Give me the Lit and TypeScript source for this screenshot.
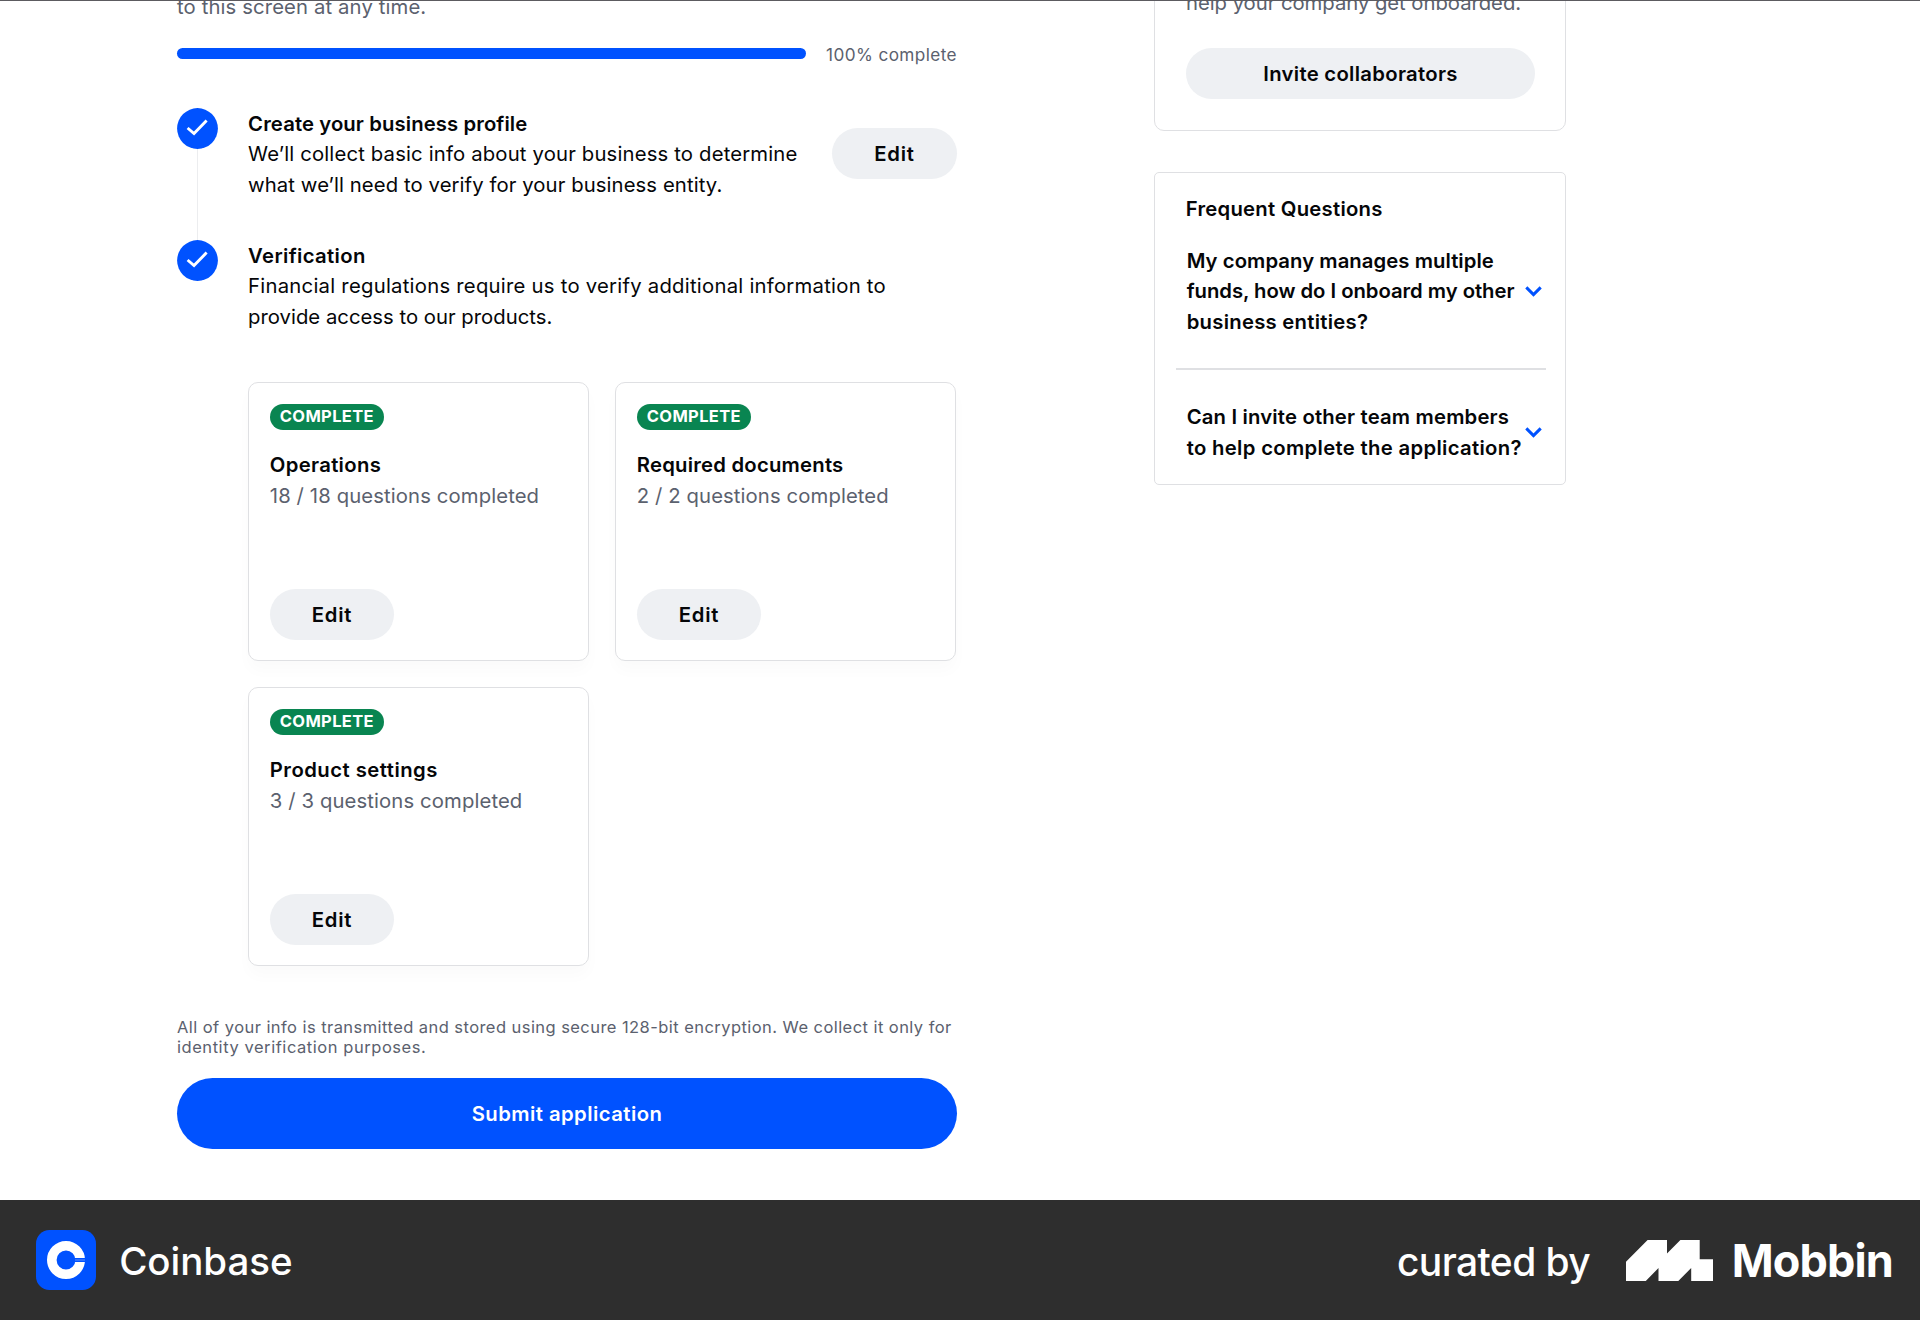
import { LitElement, html, css, svg } from 'lit';
import { customElement } from 'lit/decorators.js';

/** A line of copy and its tracking in pixels. */
type Line = [text: string, tracking: number];

interface Task {
  title: Line;
  progress: Line;
}

const INTRO: Line = ['to this screen at any time.', 0.12];
const PROFILE: Line[] = [
  ['We’ll collect basic info about your business to determine', 0.165],
  ['what we’ll need to verify for your business entity.', 0.09],
];
const VERIFICATION: Line[] = [
  ['Financial regulations require us to verify additional information to', 0.25],
  ['provide access to our products.', 0.01],
];
const TASKS: Task[] = [
  { title: ['Operations', 0.32], progress: ['18 / 18 questions completed', 0.11] },
  { title: ['Required documents', 0.22], progress: ['2 / 2 questions completed', 0.1] },
  { title: ['Product settings', 0.47], progress: ['3 / 3 questions completed', 0.11] },
];
const NOTE: Line[] = [
  ['All of your info is transmitted and stored using secure 128-bit encryption. We collect it only for', 0.44],
  ['identity verification purposes.', 0.55],
];
const QUESTIONS: Line[][] = [
  [
    ['My company manages multiple', 0.06],
    ['funds, how do I onboard my other', -0.04],
    ['business entities?', 0.26],
  ],
  [
    ['Can I invite other team members', 0.17],
    ['to help complete the application?', 0.32],
  ],
];

const line = ([text, tracking]: Line) =>
  html`<span class="line" style="letter-spacing:${tracking}px">${text}</span>`;

const check = svg`<svg class="check" viewBox="0 0 41 41" aria-hidden="true">
  <circle cx="20.5" cy="20.5" r="20.4" fill="#0052ff" />
  <path d="M10.6 20 17 25.6 29.6 12.6" fill="none" stroke="#fff" stroke-width="2.9" />
</svg>`;

const chevron = svg`<svg class="chevron" viewBox="0 0 17 11" aria-hidden="true">
  <path d="M1.3 1.4 8.5 8.6 15.7 1.4" fill="none" stroke="#0052ff" stroke-width="3" />
</svg>`;

@customElement('app-root')
export class AppRoot extends LitElement {
  static styles = css`
    :host {
      display: block;
      font-family: Inter, 'Liberation Sans', sans-serif;
      font-size: 20.3px;
      line-height: 30.5px;
      color: #050608;
    }
    * { box-sizing: border-box; }
    .page { display: flex; flex-direction: column; width: 1920px; height: 1320px; background: #fff; }
    .main {
      display: flex;
      align-items: flex-start;
      gap: 197px;
      height: 1200px;
      padding-left: 177px;
      border-top: 1px solid #5c5b60;
      overflow: hidden;
    }
    .line { display: block; white-space: nowrap; }
    .muted { color: #5b616e; }
    .title { font-weight: 600; }

    .content { width: 780px; margin-top: -8.8px; }
    .progress { display: flex; align-items: center; gap: 20.5px; height: 25px; margin-top: 19.5px; }
    .bar { width: 629px; height: 10.5px; margin-bottom: 2.5px; border-radius: 6px; background: #0052ff; }
    .percent { font-size: 17.2px; letter-spacing: 0.4px; line-height: 25px; white-space: nowrap; }

    .steps { margin-top: 41.4px; }
    .step { display: flex; gap: 30.1px; }
    .rail { display: flex; flex: none; flex-direction: column; align-items: center; width: 41px; margin-top: -0.6px; }
    .check { display: block; width: 41px; height: 41px; }
    .connector { flex: 1; width: 1.3px; background: #ecedef; }
    .body { display: flex; flex: 1; justify-content: space-between; align-items: center; padding-bottom: 40.5px; }
    .body.stacked { display: block; padding: 0; }

    .button {
      display: flex;
      align-items: center;
      justify-content: center;
      height: 51px;
      padding: 1px 0 0;
      border: 0;
      border-radius: 26px;
      background: #eef0f3;
      color: inherit;
      font: inherit;
      font-weight: 600;
      letter-spacing: 0.3px;
    }
    .edit { width: 124.5px; letter-spacing: 0.8px; }
    .body > .edit { width: 125px; margin-bottom: 2px; }

    .cards { display: grid; grid-template-columns: 341.2px 341.2px; gap: 26px 25.8px; margin-top: 50.4px; }
    .card {
      display: flex;
      flex-direction: column;
      align-items: flex-start;
      height: 279px;
      padding: 20.6px 20.7px 20px;
      border: 1px solid #dfe0e3;
      border-radius: 10px;
      background: #fff;
      box-shadow: 0 10px 15px rgba(0, 0, 0, 0.02);
    }
    .badge {
      height: 25.5px;
      margin-bottom: 20.6px;
      padding: 0 10px;
      border-radius: 13px;
      background: #098551;
      color: #fff;
      font-size: 16.5px;
      font-weight: 700;
      letter-spacing: 0.35px;
      line-height: 25.5px;
    }
    .card .button { margin-top: auto; }

    .note { margin-top: 50.4px; font-size: 16.5px; line-height: 20.3px; }
    .submit { width: 100%; height: 71px; margin-top: 20.3px; padding-top: 2px; border-radius: 36px; background: #0052ff; color: #fff; letter-spacing: 0.45px; }

    .side { display: flex; flex-direction: column; gap: 41px; width: 412px; margin-top: -33.1px; }
    .panel { border: 1px solid #dfe0e3; border-radius: 10px; }
    .invite { padding: 19px 31px 31px; }
    .invite .button { width: 349px; margin-top: 29.6px; }
    .faq { height: 313px; padding: 20.9px 16px 0 20.5px; border-radius: 5px; }
    .heading { padding: 0 10.2px; font-weight: 600; }
    .question { display: flex; align-items: center; justify-content: space-between; padding: 0 7.5px 0 11.2px; font-weight: 600; }
    .question .copy { flex: none; width: 337.5px; }
    .question.first { margin-top: 21.5px; }
    .chevron { display: block; flex: none; width: 17px; height: 11px; }
    .divider { width: 370px; height: 1.3px; margin: 31.1px 0 32.4px; background: #dfe0e3; }

    .footer {
      display: flex;
      align-items: center;
      justify-content: space-between;
      height: 120px;
      padding: 0 27px 0 36px;
      background: #2e2e2e;
      color: #fff;
    }
    .brand { display: flex; align-items: center; }
    .mark { display: block; width: 60px; height: 60px; margin-right: 23.2px; }
    .name { padding-top: 2px; font-size: 38.5px; font-weight: 500; line-height: 48px; letter-spacing: -0.05px; }
    .curated { padding-top: 4px; font-size: 39px; font-weight: 500; letter-spacing: -0.6px; line-height: 48px; }
    .glyph { display: block; width: 87px; height: 41.3px; margin: 0.3px 18.2px 0 36.4px; }
    .mobbin { padding-top: 1px; font-size: 45px; font-weight: 700; letter-spacing: -0.85px; line-height: 52px; }
  `;

  private card(task: Task) {
    return html`<article class="card">
      <span class="badge">COMPLETE</span>
      <div class="title">${line(task.title)}</div>
      <div class="muted">${line(task.progress)}</div>
      <button class="button edit">Edit</button>
    </article>`;
  }

  render() {
    return html`<div class="page">
      <main class="main">
        <section class="content">
          <div class="muted">${line(INTRO)}</div>
          <div class="progress">
            <div class="bar"></div>
            <span class="percent muted">100% complete</span>
          </div>
          <div class="steps">
            <div class="step">
              <div class="rail">${check}<div class="connector"></div></div>
              <div class="body">
                <div>
                  <div class="title">${line(['Create your business profile', 0.1])}</div>
                  ${PROFILE.map(line)}
                </div>
                <button class="button edit">Edit</button>
              </div>
            </div>
            <div class="step">
              <div class="rail">${check}</div>
              <div class="body stacked">
                <div class="title">${line(['Verification', 0.36])}</div>
                ${VERIFICATION.map(line)}
                <div class="cards">${TASKS.map((t) => this.card(t))}</div>
              </div>
            </div>
          </div>
          <div class="note muted">${NOTE.map(line)}</div>
          <button class="button submit">Submit application</button>
        </section>
        <aside class="side">
          <section class="panel invite">
            <div class="muted">${line(['help your company get onboarded.', -0.04])}</div>
            <button class="button">Invite collaborators</button>
          </section>
          <section class="panel faq">
            <div class="heading">${line(['Frequent Questions', 0.25])}</div>
            <div class="question first">
              <div class="copy">${QUESTIONS[0].map(line)}</div>
              ${chevron}
            </div>
            <div class="divider"></div>
            <div class="question">
              <div class="copy">${QUESTIONS[1].map(line)}</div>
              ${chevron}
            </div>
          </section>
        </aside>
      </main>
      <footer class="footer">
        <div class="brand">
          <svg class="mark" viewBox="0 0 60 60" aria-hidden="true">
            <rect width="60" height="60" rx="13.5" fill="#0052ff" />
            <circle cx="30" cy="30" r="14.2" fill="none" stroke="#fff" stroke-width="9.6" />
            <path d="M37 28H50V32H37Z" fill="#0052ff" />
            <path d="M39 29.4H49V30.6H39Z" fill="#4d88ff" />
          </svg>
          <span class="name">Coinbase</span>
        </div>
        <div class="brand">
          <span class="curated">curated by</span>
          <svg class="glyph" viewBox="0 0 87 41.3" aria-hidden="true">
            <path d="M0 21.7 21.6 0H41V13.4L54.4 0H73.7V19.2H87V41.3H65.2V28L52 41.3H32.5V28L19.5 41.3H0Z" fill="#fff" />
          </svg>
          <span class="mobbin">Mobbin</span>
        </div>
      </footer>
    </div>`;
  }
}
